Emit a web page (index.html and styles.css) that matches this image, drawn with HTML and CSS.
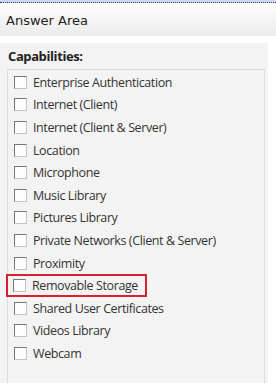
FILE: index.html
```html
<!DOCTYPE html>
<html lang="en">
<head>
    <meta charset="UTF-8">
    <title>Answer Area</title>
    <link rel="stylesheet" href="styles.css">
</head>
<body>

    <div class="top-strip"></div>
    <div class="header">Answer Area</div>

    <div class="panel">
        <div class="panel-title">Capabilities:</div>
        <div class="list">
            <div class="item"><span class="box"></span>Enterprise Authentication</div>
            <div class="item"><span class="box"></span>Internet (Client)</div>
            <div class="item"><span class="box"></span>Internet (Client &amp; Server)</div>
            <div class="item"><span class="box"></span>Location</div>
            <div class="item"><span class="box"></span>Microphone</div>
            <div class="item"><span class="box"></span>Music Library</div>
            <div class="item"><span class="box"></span>Pictures Library</div>
            <div class="item"><span class="box"></span>Private Networks (Client &amp; Server)</div>
            <div class="item"><span class="box"></span>Proximity</div>
            <div class="item selected"><span class="box"></span>Removable Storage</div>
            <div class="item"><span class="box"></span>Shared User Certificates</div>
            <div class="item"><span class="box"></span>Videos Library</div>
            <div class="item"><span class="box"></span>Webcam</div>
        </div>
    </div>

</body>
</html>
```

FILE: styles.css
```css
body {
    margin: 0;
    width: 276px;
    height: 387px;
    overflow: hidden;
    background-color: #fff;
    font-family: "Open Sans", "Noto Sans", sans-serif;
    color: #333;
}

.top-strip {
    height: 2px;
    background-color: #c9d9ef;
    border-bottom: 1px dotted #2a3f6a;
}

.header {
    height: 33px;
    padding-left: 6px;
    line-height: 35px;
    font-family: "DejaVu Sans", Verdana, sans-serif;
    font-size: 13px;
    color: #222;
    background: linear-gradient(#fdfdfd, #ececec);
}

.panel {
    margin-top: 7px;
    width: 268px;
    height: 340px;
    background-color: #f3f3f3;
    padding: 0 3px 0 7px;
    box-sizing: border-box;
}

.panel-title {
    height: 26px;
    padding-left: 1px;
    line-height: 26px;
    font-size: 13px;
    font-weight: bold;
    color: #222;
    letter-spacing: -0.4px;
}

.list {
    height: 314px;
    border: 1px solid #dcdcdc;
    border-bottom: none;
    box-sizing: border-box;
    padding: 1px 0 0 6px;
}

.item {
    display: flex;
    align-items: center;
    gap: 6px;
    height: 22.6px;
    width: max-content;
    font-size: 12.5px;
    color: #333;
    letter-spacing: -0.4px;
}

.box {
    width: 11px;
    height: 11px;
    border: 1px solid;
    border-color: #777 #c4c4c4 #c4c4c4 #777;
    background-color: #fdfdfd;
}

.selected {
    margin-left: -8px;
    padding: 0 9px 0 7px;
    outline: 2px solid #d6222e;
    outline-offset: -2px;
}
```
